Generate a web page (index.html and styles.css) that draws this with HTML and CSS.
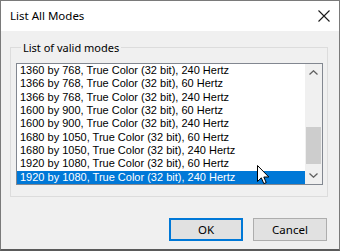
FILE: index.html
```html
<!DOCTYPE html>
<html>
<head>
<meta charset="utf-8">
<link rel="stylesheet" href="styles.css">
</head>
<body>
<div class="window">
  <div class="titlebar">
    <span class="title">List All Modes</span>
    <svg class="close" width="12" height="12" viewBox="0 0 12 12"><path d="M0.5 0.5 L11.5 11.5 M11.5 0.5 L0.5 11.5" stroke="#1a1a1a" stroke-width="1.1" fill="none"/></svg>
  </div>
  <div class="content">
    <fieldset class="group">
      <legend class="legend">List of valid modes</legend>
      <div class="listbox">
        <div class="items">
          <div class="item">1360 by 768, True Color (32 bit), 240 Hertz</div>
          <div class="item">1366 by 768, True Color (32 bit), 60 Hertz</div>
          <div class="item">1366 by 768, True Color (32 bit), 240 Hertz</div>
          <div class="item">1600 by 900, True Color (32 bit), 60 Hertz</div>
          <div class="item">1600 by 900, True Color (32 bit), 240 Hertz</div>
          <div class="item">1680 by 1050, True Color (32 bit), 60 Hertz</div>
          <div class="item">1680 by 1050, True Color (32 bit), 240 Hertz</div>
          <div class="item">1920 by 1080, True Color (32 bit), 60 Hertz</div>
          <div class="item selected">1920 by 1080, True Color (32 bit), 240 Hertz</div>
        </div>
        <div class="scrollbar">
          <div class="arrow"><svg width="9" height="5" viewBox="0 0 9 5"><path d="M0.5 4.5 L4.5 0.8 L8.5 4.5" stroke="#606060" stroke-width="1.3" fill="none"/></svg></div>
          <div class="track"><div class="thumb"></div></div>
          <div class="arrow"><svg width="9" height="5" viewBox="0 0 9 5"><path d="M0.5 0.5 L4.5 4.2 L8.5 0.5" stroke="#606060" stroke-width="1.3" fill="none"/></svg></div>
        </div>
        <svg class="cursor" width="13" height="20" viewBox="0 0 13 20"><path d="M0.5 0.5 L0.5 16.5 L4.3 12.8 L6.8 18.6 L9.2 17.6 L6.8 12 L11.8 12 Z" fill="#ffffff" stroke="#000000" stroke-width="1" stroke-linejoin="miter"/></svg>
      </div>
    </fieldset>
    <div class="buttons">
      <button class="btn default">OK</button>
      <button class="btn">Cancel</button>
    </div>
  </div>
</div>
</body>
</html>
```

FILE: styles.css
```css
html, body {
  margin: 0;
  padding: 0;
  background: #f0f0f0;
}
.window {
  box-sizing: border-box;
  width: 340px;
  height: 251px;
  border: 1px solid #7a7a7a;
  border-bottom: 2px solid #5a5a5a;
  background: #f0f0f0;
  display: flex;
  flex-direction: column;
  font-family: "Noto Sans", sans-serif;
  color: #000;
}
.titlebar {
  height: 30px;
  background: #ffffff;
  display: flex;
  align-items: center;
  justify-content: space-between;
  padding: 0 9px 0 9px;
  flex: none;
}
.title {
  font-size: 11.5px;
  margin-top: -1px;
}
.content {
  flex: 1;
  padding: 9px 11px 0 9px;
  display: flex;
  flex-direction: column;
}
.group {
  margin: 0;
  border: 1px solid #dcdcdc;
  padding: 8px 4px 11px 5px;
  min-width: 0;
}
.legend {
  font-size: 11px;
  padding: 0 2px;
  margin-left: 5px;
  line-height: 15px;
}
.listbox {
  position: relative;
  height: 122px;
  box-sizing: border-box;
  border: 1px solid #828790;
  background: #ffffff;
  display: flex;
}
.items {
  flex: 1;
  min-width: 0;
}
.item {
  height: 13.33px;
  line-height: 13.33px;
  font-family: "Liberation Sans", Arial, sans-serif;
  font-size: 11px;
  padding-left: 3px;
  white-space: nowrap;
}
.item.selected {
  background: #0078d7;
  color: #ffffff;
}
.scrollbar {
  width: 17px;
  flex: none;
  background: #f0f0f0;
  display: flex;
  flex-direction: column;
}
.arrow {
  height: 17px;
  display: flex;
  align-items: center;
  justify-content: center;
  flex: none;
}
.track {
  flex: 1;
  display: flex;
  flex-direction: column;
  align-items: center;
}
.thumb {
  width: 15px;
  height: 37px;
  margin-top: 46px;
  background: #cdcdcd;
}
.cursor {
  position: absolute;
  left: 240px;
  top: 101px;
}
.buttons {
  display: flex;
  justify-content: flex-end;
  gap: 10px;
  margin-top: 21px;
  padding-right: 1px;
}
.btn {
  width: 74px;
  height: 23px;
  box-sizing: border-box;
  background: #e1e1e1;
  border: 1px solid #adadad;
  font-family: "Noto Sans", sans-serif;
  font-size: 11.5px;
  color: #000;
  padding: 0;
  margin: 0;
}
.btn.default {
  border: 2px solid #0078d7;
}
```
